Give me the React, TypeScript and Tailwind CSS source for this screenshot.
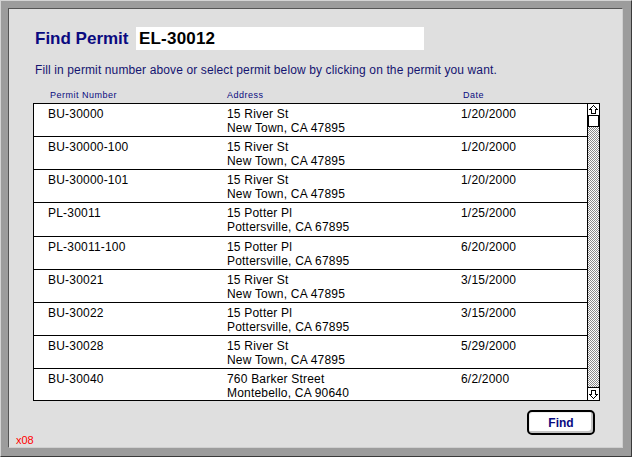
import React from 'react';

type Permit = { num: string; street: string; city: string; date: string };

const PERMITS: Permit[] = [
  { num: 'BU-30000', street: '15 River St', city: 'New Town, CA 47895', date: '1/20/2000' },
  { num: 'BU-30000-100', street: '15 River St', city: 'New Town, CA 47895', date: '1/20/2000' },
  { num: 'BU-30000-101', street: '15 River St', city: 'New Town, CA 47895', date: '1/20/2000' },
  { num: 'PL-30011', street: '15 Potter Pl', city: 'Pottersville, CA 67895', date: '1/25/2000' },
  { num: 'PL-30011-100', street: '15 Potter Pl', city: 'Pottersville, CA 67895', date: '6/20/2000' },
  { num: 'BU-30021', street: '15 River St', city: 'New Town, CA 47895', date: '3/15/2000' },
  { num: 'BU-30022', street: '15 Potter Pl', city: 'Pottersville, CA 67895', date: '3/15/2000' },
  { num: 'BU-30028', street: '15 River St', city: 'New Town, CA 47895', date: '5/29/2000' },
  { num: 'BU-30040', street: '760 Barker Street', city: 'Montebello, CA 90640', date: '6/2/2000' },
];

function Arrow({ down = false }: { down?: boolean }) {
  return (
    <svg width="11" height="11" viewBox="0 0 11 11" shapeRendering="crispEdges" className={down ? 'rotate-180' : ''}>
      <path d="M5.5 1.5 L9.5 5.5 L7.5 5.5 L7.5 9.5 L3.5 9.5 L3.5 5.5 L1.5 5.5 Z" fill="#fff" stroke="#000" strokeWidth="1" />
    </svg>
  );
}

export default function App() {
  return (
    <div
      className="w-[632px] h-[457px] border border-t-[#d4d4d4] border-l-[#d4d4d4] border-r-[#3a3a3a] border-b-[#3a3a3a] bg-[#9c9c9c] pt-[7px] pl-[7px] pr-[8px] pb-[8px]"
      style={{ fontFamily: '"Liberation Sans", Arial, sans-serif' }}
    >
      <div className="w-full h-full border border-t-[#555] border-l-[#555] border-r-[#cfcfcf] border-b-[#cfcfcf] bg-[#dfdfdf] flex flex-col">
        <div className="pl-[24px] pr-[22px] pt-[18px] flex flex-col">
          {/* Title + search */}
          <div className="flex items-center h-[23px]">
            <span className="ml-[2px] w-[101px] text-[17px] leading-[23px] font-bold text-[#0a0a80]">Find Permit</span>
            <div className="w-[288px] h-[23px] bg-white pl-[3px] text-[17px] leading-[23px] font-bold tracking-[0.2px] text-black">EL-30012</div>
          </div>

          <p className="mt-[13px] ml-[2px] text-[12px] leading-[14px] tracking-[0.12px] text-[#141470]">
            Fill in permit number above or select permit below by clicking on the permit you want.
          </p>

          {/* Column headers */}
          <div className="mt-[13px] ml-[1px] grid grid-cols-[193px_234px_1fr] text-[9px] leading-[10px] tracking-[0.5px] text-[#0a0a80]">
            <span className="pl-[16px]">Permit Number</span>
            <span>Address</span>
            <span className="pl-[2px]">Date</span>
          </div>

          {/* List */}
          <div className="mt-[3px] w-[567px] h-[298px] border border-black bg-white flex">
            <div className="flex-1 flex flex-col">
              {PERMITS.map((p, i) => (
                <div
                  key={p.num}
                  className={`h-[32px] grid grid-cols-[193px_234px_1fr] pt-[3px] text-[12px] leading-[14px] tracking-[0.2px] text-black ${
                    i < PERMITS.length - 1 ? 'box-content border-b border-black' : ''
                  }`}
                >
                  <span className="pl-[14px]">{p.num}</span>
                  <span className="flex flex-col">
                    <span>{p.street}</span>
                    <span>{p.city}</span>
                  </span>
                  <span>{p.date}</span>
                </div>
              ))}
            </div>

            {/* Scrollbar */}
            <div className="w-[12px] border-l border-black flex flex-col">
              <div className="h-[12px] border-b border-black flex items-center justify-center">
                <Arrow />
              </div>
              <div className="h-[11px] border-x border-b border-black bg-white" />
              <div className="flex-1 bg-[repeating-conic-gradient(#8a8a8a_0%_25%,#ffffff_0%_50%)] bg-[length:2px_2px]" />
              <div className="h-[13px] border-t border-black flex items-center justify-center">
                <Arrow down />
              </div>
            </div>
          </div>
        </div>

        {/* Bottom bar */}
        <div className="mt-[9px] h-[37px] flex justify-between items-start pl-[7px] pr-[27px]">
          <span className="self-end text-[11px] leading-[13px] text-[#ff0000]">x08</span>
          <button className="w-[68px] h-[25px] border-2 border-black rounded-[5px] bg-white shadow-[inset_-2px_-2px_0_#c4c4c4,inset_1px_1px_0_#eeeeee] text-[12px] font-bold text-[#0a0a80]">
            Find
          </button>
        </div>
      </div>
    </div>
  );
}
